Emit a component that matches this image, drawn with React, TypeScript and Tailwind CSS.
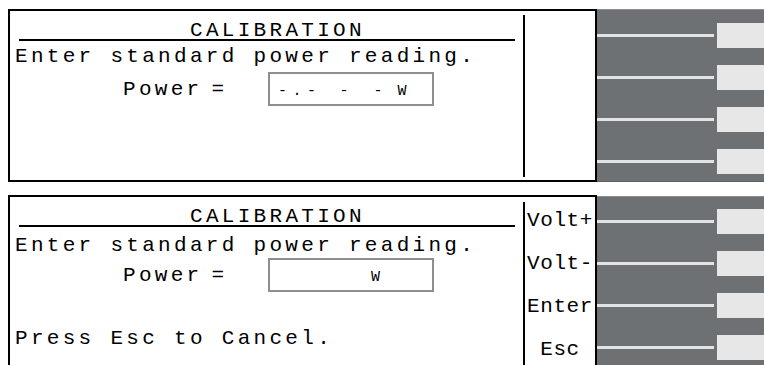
import React from "react"

const mono = "font-['Liberation_Mono','DejaVu_Sans_Mono',monospace] text-black"

const KeyRows = ({ live }: { live: boolean }) => (
  <div
    className={`w-[167px] bg-[#6d7173] border-t border-[#8a8d8f] flex flex-col gap-[17px] ${
      live ? "mt-[1px] pt-[12px]" : "pt-[13px] border-b border-b-[#5c5f61]"
    }`}
  >
    {[0, 1, 2, 3].map((i) => (
      <div key={i} className="h-[25px] flex items-center">
        <div className="w-[117px] h-[3px] bg-[#e3e3e3]" />
        <div className="ml-[3px] w-[47px] h-[25px] bg-[#e7e7e7]" />
      </div>
    ))}
  </div>
)

const Screen = ({ live }: { live: boolean }) => {
  const labels = ["Volt+", "Volt-", "Enter", "Esc"]

  return (
    <div className={`flex ${live ? "mt-[13px] h-[170px]" : "mt-[9px] h-[173px]"}`}>
      <div className={`ml-[8px] w-[589px] flex border-2 border-black bg-white ${live ? "border-b-0" : ""}`}>
        <div className="w-[513px] flex flex-col text-[21px]">
          <div className="pt-[11px] pl-[180px] leading-[17px] tracking-[3.3px]">CALIBRATION</div>
          <div className="ml-[9px] w-[496px] h-[2px] bg-black" />
          <div className={`${live ? "mt-[6px]" : "mt-[3px]"} pl-[5px] leading-[26px] tracking-[3.3px]`}>
            Enter standard power reading.
          </div>
          <div className={`${live ? "-mt-[1px]" : "mt-[2px]"} flex items-center h-[34px]`}>
            <div className="w-[258px] flex items-center pl-[113px] pt-[1px] leading-[26px]">
              <span className="tracking-[3.3px]">Power</span>
              <span className="ml-[9px]">=</span>
            </div>
            <div className="w-[166px] h-[34px] border-2 border-[#8e8e8e] flex items-center pt-[6px] text-[15px] leading-[20px]">
              {live ? (
                <span className="pl-[101px]">W</span>
              ) : (
                <>
                  <span className="pl-[8px] tracking-[5.5px]">-.-</span>
                  <span className="ml-[18px]">-</span>
                  <span className="ml-[25px]">-</span>
                  <span className="ml-[15px]">W</span>
                </>
              )}
            </div>
          </div>
          {live && <div className="mt-[34px] pl-[5px] leading-[26px] tracking-[3.3px]">Press Esc to Cancel.</div>}
        </div>
        <div className={`w-[2px] bg-black ${live ? "mt-[5px]" : "mt-[4px] mb-[3px]"}`} />
        <div className="flex-1 flex flex-col items-center pt-[2px] text-[21px] tracking-[0.6px]">
          {live &&
            labels.map((l) => (
              <div key={l} className="leading-[43px]">
                {l}
              </div>
            ))}
        </div>
      </div>
      <KeyRows live={live} />
    </div>
  )
}

export default function App() {
  return (
    <div className={`w-[764px] h-[365px] overflow-hidden bg-white ${mono}`}>
      <Screen live={false} />
      <Screen live={true} />
    </div>
  )
}
